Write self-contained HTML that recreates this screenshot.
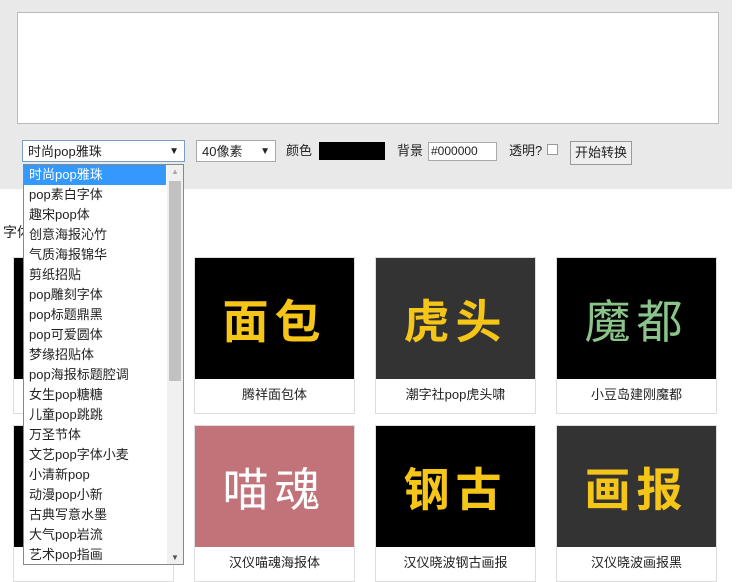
<!DOCTYPE html><html><head><meta charset="utf-8"><style>
body{margin:0;width:742px;height:570px;overflow:hidden;background:#fff;font-family:"Liberation Sans","Noto Sans CJK SC",sans-serif;font-size:13px;color:#222;position:relative}
.panel{position:absolute;left:0;top:0;width:732px;height:189px;background:#e9e9e9}
.ta{position:absolute;left:17px;top:12px;width:700px;height:110px;background:#fff;border:1px solid #bbb}
.ctl{position:absolute;top:140px;height:22px;line-height:22px;font-size:13px}
.sel{background:#fff;border:1px solid #aaa;box-sizing:border-box;padding-left:5px}
.card{position:absolute;width:159px;border:1px solid #ddd;background:#fff}
.card .img{height:121px;display:flex;align-items:center;justify-content:center;font-size:46px;font-weight:bold;color:#f5c518;letter-spacing:6px}
.card .cap{height:34px;line-height:32px;text-align:center;font-size:13px}
.dd{position:absolute;left:23px;top:164px;width:161px;height:401px;background:#fff;border:1px solid #888;box-sizing:border-box;overflow:hidden}
.dd .it{height:20px;line-height:20px;padding-left:5px;font-size:13px;width:137px}
.sb{position:absolute;right:0;top:0;width:16px;height:100%;background:#f0f0f0}
</style></head><body>
<div class="panel"></div>
<div class="ta"></div>
<div class="ctl sel" style="left:22px;width:163px;border-color:#7a9cc6">时尚pop雅珠<span style="position:absolute;right:5px;font-size:10px">▼</span></div>
<div class="ctl sel" style="left:196px;width:80px">40像素<span style="position:absolute;right:5px;font-size:10px">▼</span></div>
<div class="ctl" style="left:286px">颜色</div>
<div class="ctl" style="left:319px;top:142px;width:66px;height:18px;background:#000"></div>
<div class="ctl" style="left:397px">背景</div>
<div class="ctl sel" style="left:428px;top:142px;width:69px;height:19px;line-height:17px;padding-left:2px;font-size:12px">#000000</div>
<div class="ctl" style="left:509px">透明?</div>
<div class="ctl" style="left:547px;top:144px;width:11px;height:11px;border:1px solid #999;background:#fff;box-sizing:border-box"></div>
<div class="ctl" style="left:570px;top:141px;width:62px;height:24px;border:1px solid #999;background:#eee;box-sizing:border-box;text-align:center">开始转换</div>
<div style="position:absolute;left:3px;top:222px;font-size:14px">字体</div>
<div class="card" style="left:13px;top:257px"><div class="img" style="background:#000"></div><div class="cap"></div></div>
<div class="card" style="left:194px;top:257px"><div class="img" style="background:#000">面包</div><div class="cap">腾祥面包体</div></div>
<div class="card" style="left:375px;top:257px"><div class="img" style="background:#333">虎头</div><div class="cap">潮字社pop虎头啸</div></div>
<div class="card" style="left:556px;top:257px"><div class="img" style="background:#000;color:#8bc48a;font-weight:normal">魔都</div><div class="cap">小豆岛建刚魔都</div></div>
<div class="card" style="left:13px;top:425px"><div class="img" style="background:#000"></div><div class="cap"></div></div>
<div class="card" style="left:194px;top:425px"><div class="img" style="background:#c2737a;color:#fff;font-weight:normal">喵魂</div><div class="cap">汉仪喵魂海报体</div></div>
<div class="card" style="left:375px;top:425px"><div class="img" style="background:#000">钢古</div><div class="cap">汉仪晓波钢古画报</div></div>
<div class="card" style="left:556px;top:425px"><div class="img" style="background:#333">画报</div><div class="cap">汉仪晓波画报黑</div></div>
<div class="dd">
<div class="it" style="background:#3399ff;color:#fff">时尚pop雅珠</div>
<div class="it">pop素白字体</div><div class="it">趣宋pop体</div><div class="it">创意海报沁竹</div><div class="it">气质海报锦华</div><div class="it">剪纸招贴</div><div class="it">pop雕刻字体</div><div class="it">pop标题鼎黑</div><div class="it">pop可爱圆体</div><div class="it">梦缘招贴体</div><div class="it">pop海报标题腔调</div><div class="it">女生pop糖糖</div><div class="it">儿童pop跳跳</div><div class="it">万圣节体</div><div class="it">文艺pop字体小麦</div><div class="it">小清新pop</div><div class="it">动漫pop小新</div><div class="it">古典写意水墨</div><div class="it">大气pop岩流</div><div class="it">艺术pop指画</div>
<div class="sb"><div style="position:absolute;left:2px;top:16px;width:12px;height:200px;background:#c1c1c1"></div><span style="position:absolute;top:2px;left:4px;font-size:8px;color:#aaa">▲</span><span style="position:absolute;bottom:2px;left:4px;font-size:8px;color:#555">▼</span></div>
</div>
</body></html>
